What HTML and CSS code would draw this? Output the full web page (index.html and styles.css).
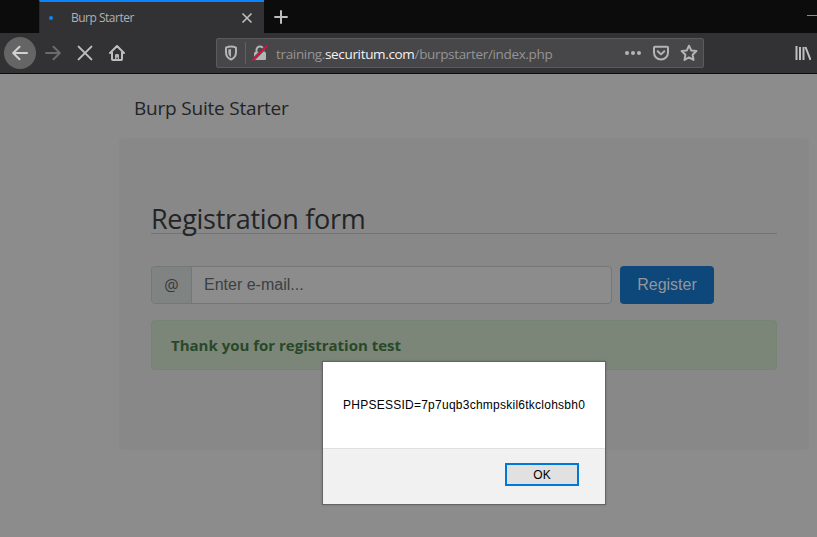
FILE: index.html
```html
<!DOCTYPE html>
<html lang="en">
<head>
<meta charset="utf-8">
<title>Burp Starter</title>
<link rel="stylesheet" href="styles.css">
</head>
<body>
<header class="browser">
  <div class="tabbar">
    <div class="tab">
      <span class="loading-dot"></span>
      <span class="tab-title">Burp Starter</span>
      <svg class="tab-close" width="12" height="12" viewBox="0 0 12 12"><path d="M1.5 1.5l9 9M10.5 1.5l-9 9"/></svg>
    </div>
    <svg class="new-tab" width="14" height="14" viewBox="0 0 14 14"><path d="M7 .3v13.4M.3 7h13.4"/></svg>
    <span class="minimize"></span>
  </div>
  <nav class="toolbar">
    <span class="back"><svg class="icon" width="16" height="16" viewBox="0 0 16 16"><path d="M15 8H1.5M7.500 1.700L1.200 8l6.300 6.300"/></svg></span>
    <svg class="icon forward" width="16" height="16" viewBox="0 0 16 16"><path d="M1 8h13.500M8.500 1.700L14.800 8l-6.300 6.300"/></svg>
    <svg class="icon stop" width="16" height="16" viewBox="0 0 16 16"><path d="M1.600 1.600l12.800 12.800M14.400 1.600L1.600 14.400"/></svg>
    <svg class="icon home" width="16" height="16" viewBox="0 0 16 16"><path d="M1 8l7-7 7 7M3 7v7.200q0 .8.8.8h8.400q.8 0 .8-.8V7"/><path class="solid" d="M6 15V10.200q0-1.200 1.200-1.200h1.600q1.200 0 1.200 1.200V15H8.800v-2.500H7.500V15z"/></svg>
    <div class="urlbar">
      <svg class="icon shield" width="14" height="16" viewBox="0 0 14 16"><path d="M7 1.600c1.700 0 3.600.5 5 1.100v4.500c0 3.300-1.800 6-5 7.300-3.200-1.300-5-4-5-7.300V2.700c1.400-.6 3.300-1.100 5-1.100z"/><path class="solid" d="M7 4v8.200C5.200 11 4.300 9.300 4.300 7.200V4.600C5.200 4.300 6.200 4 7 4z"/></svg>
      <span class="divider"></span>
      <svg class="icon lock" width="16" height="16" viewBox="0 0 16 16"><path d="M4.500 8V5a3.500 3.500 0 0 1 7 0v3"/><rect class="solid" x="2" y="7" width="12" height="8" rx="1.200"/><path class="slash-gap" d="M1.200 14.700L14.500 1.400"/><path class="slash" d="M1.200 14.700L14.500 1.400"/></svg>
      <span class="url">training.<b>securitum.com</b>/burpstarter/index.php</span>
      <span class="actions">
        <svg class="icon" width="18" height="16" viewBox="0 0 18 16"><g class="solid"><circle cx="3" cy="8" r="2"/><circle cx="9" cy="8" r="2"/><circle cx="15" cy="8" r="2"/></g></svg>
        <svg class="icon" width="16" height="16" viewBox="0 0 16 16"><path d="M2 1.800h12q1 0 1 1V7.500a7 7 0 0 1-14 0V2.800q0-1 1-1z"/><path d="M4.700 6.200L8 9.400l3.300-3.200"/></svg>
        <svg class="icon star" width="18" height="18" viewBox="0 0 18 18"><path d="M9 1.700l2.200 4.700 5.200.7-3.800 3.600.9 5.200L9 13.400l-4.500 2.500.9-5.200L1.600 7.100l5.200-.7z"/></svg>
      </span>
    </div>
    <svg class="icon library" width="16" height="16" viewBox="0 0 16 16"><path d="M1.500 1v14M5 2v13M8.500 2v13M10.500 2l5 13"/></svg>
  </nav>
</header>
<main class="page">
  <h1 class="brand"><span>Burp Suite Starter</span></h1>
  <section class="jumbotron">
    <h2 class="form-title"><span>Registration form</span></h2>
    <div class="form-row">
      <div class="input-group">
        <span class="addon">@</span>
        <span class="field">Enter e-mail...</span>
      </div>
      <button class="register">Register</button>
    </div>
    <div class="alert"><strong>Thank you for registration test</strong></div>
  </section>
</main>
<div class="dialog" role="alertdialog">
  <div class="dialog-body"><span>PHPSESSID=7p7uqb3chmpskil6tkclohsbh0</span></div>
  <div class="dialog-footer"><button class="ok">OK</button></div>
</div>
</body>
</html>
```
FILE: styles.css
```css
* { box-sizing: border-box; }
body {
  margin: 0;
  height: 537px;
  overflow: hidden;
  background: #8c8c8c;
  color: #222426;
  font-family: "Open Sans", sans-serif;
}
button { font: inherit; padding: 0; margin: 0; }

/* Browser chrome */
.browser { height: 74px; background: #323234; border-bottom: 1px solid #0c0c0d; }
.tabbar { height: 33px; display: flex; align-items: center; background: #0c0c0d; padding-left: 39px; }
.tab {
  width: 225px;
  height: 33px;
  display: flex;
  align-items: center;
  background: #323234;
  border-top: 2px solid #0a84ff;
  border-left: 1px solid #28282a;
  padding: 0 11px 0 9px;
}
.loading-dot { width: 4px; height: 4px; border-radius: 50%; background: #0a84ff; margin-right: 18px; }
.tab-title { font-size: 12px; line-height: 16px; color: #b1b1b3; letter-spacing: -0.5px; }
.tab-close { margin-left: auto; fill: none; stroke: #bebebe; stroke-width: 1.6; }
.new-tab { margin-left: 10px; fill: none; stroke: #bebebe; stroke-width: 2; }
.minimize { width: 10px; height: 1px; background: #8c8c8c; margin: -3px 0 0 auto; }
.toolbar { height: 40px; display: flex; align-items: center; padding-left: 4px; }
.icon { display: block; flex: none; fill: none; stroke: #bebebe; stroke-width: 2; stroke-linecap: round; stroke-linejoin: round; }
.icon .solid { fill: #b4b4b5; stroke: none; }
.back {
  width: 32px;
  height: 32px;
  border-radius: 50%;
  background: #656566;
  display: flex;
  align-items: center;
  justify-content: center;
}
.back .icon { stroke: #d2d2d2; }
.forward { margin-left: 9px; stroke: #6b6b6d; }
.stop { margin-left: 16px; }
.home { margin-left: 16px; }
.urlbar {
  width: 488px;
  height: 30px;
  margin-left: 91px;
  display: flex;
  align-items: center;
  background: #474749;
  border: 1px solid #5b5b5d;
  border-radius: 2px;
  padding: 0 5px 0 7px;
}
.urlbar .icon { stroke: #b4b4b5; }
.divider { width: 1px; height: 22px; background: #626265; margin: 0 6px 0 7px; }
.urlbar .slash-gap { stroke: #474749; stroke-width: 3; }
.urlbar .slash { stroke: #f0083c; stroke-width: 2; }
.url { font-size: 13.5px; line-height: 20px; color: #949496; margin: 2px 0 0 8px; letter-spacing: -0.34px; white-space: nowrap; }
.url b { font-weight: 400; color: #f3f3f4; }
.actions { display: flex; align-items: center; gap: 11px; margin-left: auto; }
.library { margin-left: 91px; stroke-linecap: butt; }

/* Page content */
.page { width: 690px; margin-left: 119px; padding-top: 21px; }
.brand { margin: 0; padding-left: 15px; height: 43px; font-size: 19px; line-height: 26px; font-weight: 400; letter-spacing: -0.2px; }
.jumbotron { height: 312px; padding: 64px 32px 0; border-radius: 5px; background: #888; }
.form-title { margin: 0 0 0; height: 32px; font-size: 27px; line-height: 34px; font-weight: 400; letter-spacing: -0.3px; border-bottom: 1px solid #737373; }
.form-row { display: flex; gap: 8px; margin-top: 32px; }
.input-group { width: 461px; height: 38px; display: flex; border: 1px solid #737776; border-radius: 4px; background: #8c8c8c; }
.addon { width: 40px; display: flex; align-items: center; justify-content: center; background: #7f8381; color: #37393b; border-right: 1px solid #737776; border-radius: 3px 0 0 3px; font-size: 16px; }
.field { padding-left: 12px; font: 16px/35px "Liberation Sans", sans-serif; color: #3b4043; }
.register { width: 94px; height: 38px; border: 0; border-radius: 4px; background: #0e487b; color: #949698; font: 16px/36px "Liberation Sans", sans-serif; }
.alert { height: 50px; margin-top: 16px; padding-left: 19px; border: 1px solid #748571; border-radius: 4px; background: #7b8678; color: #294829; font-size: 15px; line-height: 49px; letter-spacing: 0; }
.alert strong { font-weight: 700; }

/* Alert popup floating over the page */
.dialog { position: absolute; left: 322px; top: 361px; width: 284px; height: 144px; border: 1px solid #646464; background: #fff; color: #000; font: 12px/16px "Liberation Sans", sans-serif; box-shadow: 0 0 2px rgba(0, 0, 0, .2); }
.dialog-body { height: 86px; padding: 35px 0 0 20px; white-space: nowrap; letter-spacing: 0.25px; }
.dialog-footer { height: 56px; padding: 14px 26px 0 0; border-top: 1px solid #dfdfdf; background: #f1f1f1; display: flex; justify-content: flex-end; }
.ok { width: 74px; height: 23px; border: 2px solid #0078d7; background: #e1e1e1; color: #000; line-height: 18px; }
```
